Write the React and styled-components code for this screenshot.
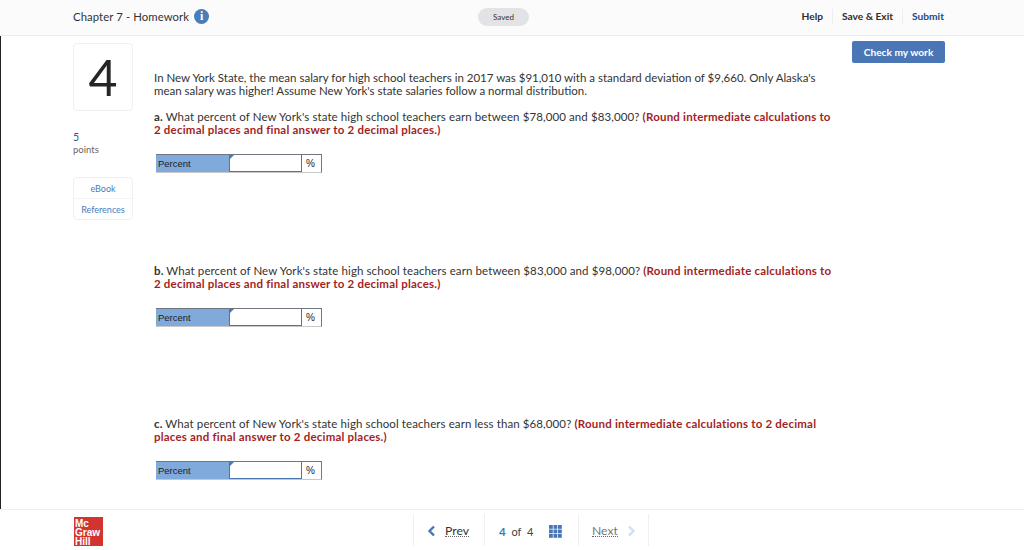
import React from "react";
import styled, { createGlobalStyle } from "styled-components";

const Global = createGlobalStyle`
  html, body { margin: 0; padding: 0; background: #fff; }
  body { font-family: "Lato", "Liberation Sans", sans-serif; color: #2c2c2c; }
`;

const Page = styled.div`
  width: 1024px;
  height: 550px;
  display: flex;
  flex-direction: column;
  overflow: hidden;
`;

const Header = styled.header`
  height: 36px;
  flex: none;
  box-sizing: border-box;
  display: grid;
  grid-template-columns: 405px 51px 1fr;
  align-items: center;
  padding: 0 80px 2px 73px;
  background: #fbfbfb;
  border-bottom: 1px solid #ececec;
`;

const TitleGroup = styled.div`
  display: flex;
  align-items: center;
  gap: 5px;
`;

const Title = styled.span`
  font-size: 11.3px;
  letter-spacing: 0.1px;
  color: #333;
`;

const InfoBadge = styled.span`
  width: 15px;
  height: 15px;
  border-radius: 50%;
  background: #4a7cba;
  color: #fff;
  font: 700 12px "Liberation Serif", serif;
  display: flex;
  align-items: center;
  justify-content: center;
`;

const SavedPill = styled.span`
  width: 51px;
  height: 18px;
  border-radius: 9px;
  background: #e3e2e5;
  font-size: 8px;
  color: #333;
  display: flex;
  align-items: center;
  justify-content: center;
`;

const HeaderActions = styled.nav`
  display: flex;
  justify-content: flex-end;
  align-items: center;
`;

const HeaderAction = styled.span`
  font-size: 10.2px;
  font-weight: 700;
  line-height: 15px;
  padding: 0 9px;
  color: ${(p) => (p.$primary ? "#24497f" : "#2d2d2d")};
  border-left: ${(p) => (p.$divider ? "1px solid #eee" : "none")};
  &:last-child { padding-right: 0; }
`;

const Main = styled.main`
  flex: 1;
  min-height: 0;
  display: flex;
  border-left: 1px solid #222;
`;

const Sidebar = styled.aside`
  width: 60px;
  margin-left: 72px;
  padding-top: 7px;
  flex: none;
`;

const NumberCard = styled.div`
  width: 60px;
  height: 68px;
  box-sizing: border-box;
  border: 1px solid #f0f0f0;
  border-radius: 4px;
  display: flex;
  align-items: center;
  justify-content: center;
  font-size: 50px;
  color: #262626;
`;

const Points = styled.div`
  margin-top: 20px;
  font-size: 9.5px;
  line-height: 12px;
  color: #666;
`;

const PointValue = styled.div`
  color: #2a5d9c;
  font-size: 10.5px;
  line-height: 13px;
`;

const ResourceCard = styled.div`
  margin-top: 21px;
  border: 1px solid #f0f0f0;
  border-radius: 4px;
`;

const ResourceLink = styled.div`
  height: 20px;
  display: flex;
  align-items: center;
  justify-content: center;
  font-size: 9px;
  color: #4a7cba;
  & + & { border-top: 1px solid #f4f4f4; }
`;

const Content = styled.section`
  width: 680px;
  margin-left: 21px;
  padding-top: 35px;
  flex: none;
  font-size: 11.5px;
  line-height: 13px;
  color: #333;
`;

const Intro = styled.p`
  margin: 0 0 13px;
`;

const Question = styled.div`
  height: 153.5px;
`;

const Prompt = styled.p`
  margin: 0;
  letter-spacing: 0.1px;
`;

const Letter = styled.b`
  font-weight: 700;
`;

const Note = styled.b`
  font-weight: 700;
  color: #a31f1f;
  letter-spacing: 0.2px;
`;

const AnswerRow = styled.div`
  display: flex;
  width: 166px;
  height: 19px;
  margin: 18px 0 0 2px;
  box-sizing: border-box;
  border-top: 1px solid #6f7680;
  border-bottom: 1px solid #c8c8c8;
  border-right: 1px solid #777;
  font: 9.5px "Liberation Sans", sans-serif;
`;

const AnswerLabel = styled.div`
  width: 73px;
  padding-left: 2px;
  box-sizing: border-box;
  background: #80a9dc;
  display: flex;
  align-items: center;
  color: #222;
`;

const AnswerInput = styled.div`
  width: 73px;
  position: relative;
  box-sizing: border-box;
  border: 1px solid #4a76ae;
  border-top: none;
  background: #fff;
  &::before {
    content: "";
    position: absolute;
    left: 0;
    top: 0;
    border-top: 4px solid #4a7cba;
    border-right: 4px solid transparent;
  }
`;

const AnswerUnit = styled.div`
  flex: 1;
  padding-left: 4px;
  display: flex;
  align-items: center;
  font-size: 10px;
  color: #222;
`;

const RightColumn = styled.div`
  margin-left: 18px;
  padding-top: 5px;
`;

const CheckButton = styled.button`
  display: block;
  width: 93px;
  height: 22px;
  padding: 0;
  border: none;
  border-radius: 2px;
  background: #4a76b5;
  color: #fff;
  font: 700 10.2px "Lato", sans-serif;
`;

const Footer = styled.footer`
  height: 41px;
  flex: none;
  box-sizing: border-box;
  border-top: 1px solid #efefef;
  display: flex;
  padding-left: 74px;
`;

const Logo = styled.div`
  width: 29px;
  height: 29px;
  margin-top: 7px;
  background: #d2342f;
  color: #fff;
  font: 700 10px/9px "Liberation Sans", sans-serif;
  padding: 2px 0 0 1px;
  box-sizing: border-box;
  overflow: hidden;
`;

const Pager = styled.div`
  margin: 4px 0 0 310px;
  height: 32px;
  display: flex;
  align-items: center;
  border-left: 1px solid #f0f0f0;
`;

const PagerCell = styled.div`
  display: flex;
  align-items: center;
  height: 100%;
  width: ${(p) => p.$w}px;
  gap: ${(p) => p.$gap || 0}px;
  box-sizing: border-box;
  padding-left: ${(p) => p.$pad}px;
  padding-top: 2px;
  border-right: 1px solid #f0f0f0;
`;

const PagerLink = styled.span`
  font-size: 12.2px;
  color: ${(p) => (p.$dim ? "#777" : "#333")};
  border-bottom: 1px dotted #666;
  line-height: 11px;
`;

const Count = styled.span`
  font-size: 11px;
  color: #444;
  word-spacing: 3px;
`;

const CountCurrent = styled.b`
  color: #4a76b5;
  font-size: 11.5px;
`;

const Chevron = ({ dir, dim }) => (
  <svg width="9" height="12" viewBox="0 0 9 12" fill="none">
    <path
      d={dir === "left" ? "M7 1.5 2.5 6 7 10.5" : "M2 1.5 6.5 6 2 10.5"}
      stroke={dim ? "#d3dff0" : "#4a76b5"}
      strokeWidth="2.4"
    />
  </svg>
);

const GridIcon = () => (
  <svg width="13" height="13" viewBox="0 0 13 13" fill="#4a76b5">
    {[0, 4.5, 9].flatMap((y) =>
      [0, 4.5, 9].map((x) => <rect key={`${x}-${y}`} x={x} y={y} width="3.8" height="3.8" />)
    )}
  </svg>
);

const Answer = () => (
  <AnswerRow>
    <AnswerLabel>Percent</AnswerLabel>
    <AnswerInput />
    <AnswerUnit>%</AnswerUnit>
  </AnswerRow>
);

const round = "(Round intermediate calculations to 2 decimal places and final answer to 2 decimal places.)";

export default function App() {
  return (
    <Page>
      <Global />
      <Header>
        <TitleGroup>
          <Title>Chapter 7 - Homework</Title>
          <InfoBadge>i</InfoBadge>
        </TitleGroup>
        <SavedPill>Saved</SavedPill>
        <HeaderActions>
          <HeaderAction>Help</HeaderAction>
          <HeaderAction $divider>Save &amp; Exit</HeaderAction>
          <HeaderAction $divider $primary>Submit</HeaderAction>
        </HeaderActions>
      </Header>
      <Main>
        <Sidebar>
          <NumberCard>4</NumberCard>
          <Points>
            <PointValue>5</PointValue>
            points
          </Points>
          <ResourceCard>
            <ResourceLink>eBook</ResourceLink>
            <ResourceLink>References</ResourceLink>
          </ResourceCard>
        </Sidebar>
        <Content>
          <Intro>
            In New York State, the mean salary for high school teachers in 2017 was $91,010 with a standard deviation of $9,660. Only Alaska's mean salary was higher! Assume New York's state salaries follow a normal distribution.
          </Intro>
          <Question>
            <Prompt>
              <Letter>a.</Letter> What percent of New York's state high school teachers earn between $78,000 and $83,000? <Note>{round}</Note>
            </Prompt>
            <Answer />
          </Question>
          <Question>
            <Prompt>
              <Letter>b.</Letter> What percent of New York's state high school teachers earn between $83,000 and $98,000? <Note>{round}</Note>
            </Prompt>
            <Answer />
          </Question>
          <Question>
            <Prompt>
              <Letter>c.</Letter> What percent of New York's state high school teachers earn less than $68,000? <Note>{round}</Note>
            </Prompt>
            <Answer />
          </Question>
        </Content>
        <RightColumn>
          <CheckButton>Check my work</CheckButton>
        </RightColumn>
      </Main>
      <Footer>
        <Logo>Mc<br />Graw<br />Hill</Logo>
        <Pager>
          <PagerCell $w={71} $pad={13} $gap={9}>
            <Chevron dir="left" />
            <PagerLink>Prev</PagerLink>
          </PagerCell>
          <PagerCell $w={94} $pad={14} $gap={16}>
            <Count><CountCurrent>4</CountCurrent> of 4</Count>
            <GridIcon />
          </PagerCell>
          <PagerCell $w={70} $pad={13} $gap={9}>
            <PagerLink $dim>Next</PagerLink>
            <Chevron dir="right" dim />
          </PagerCell>
        </Pager>
      </Footer>
    </Page>
  );
}
